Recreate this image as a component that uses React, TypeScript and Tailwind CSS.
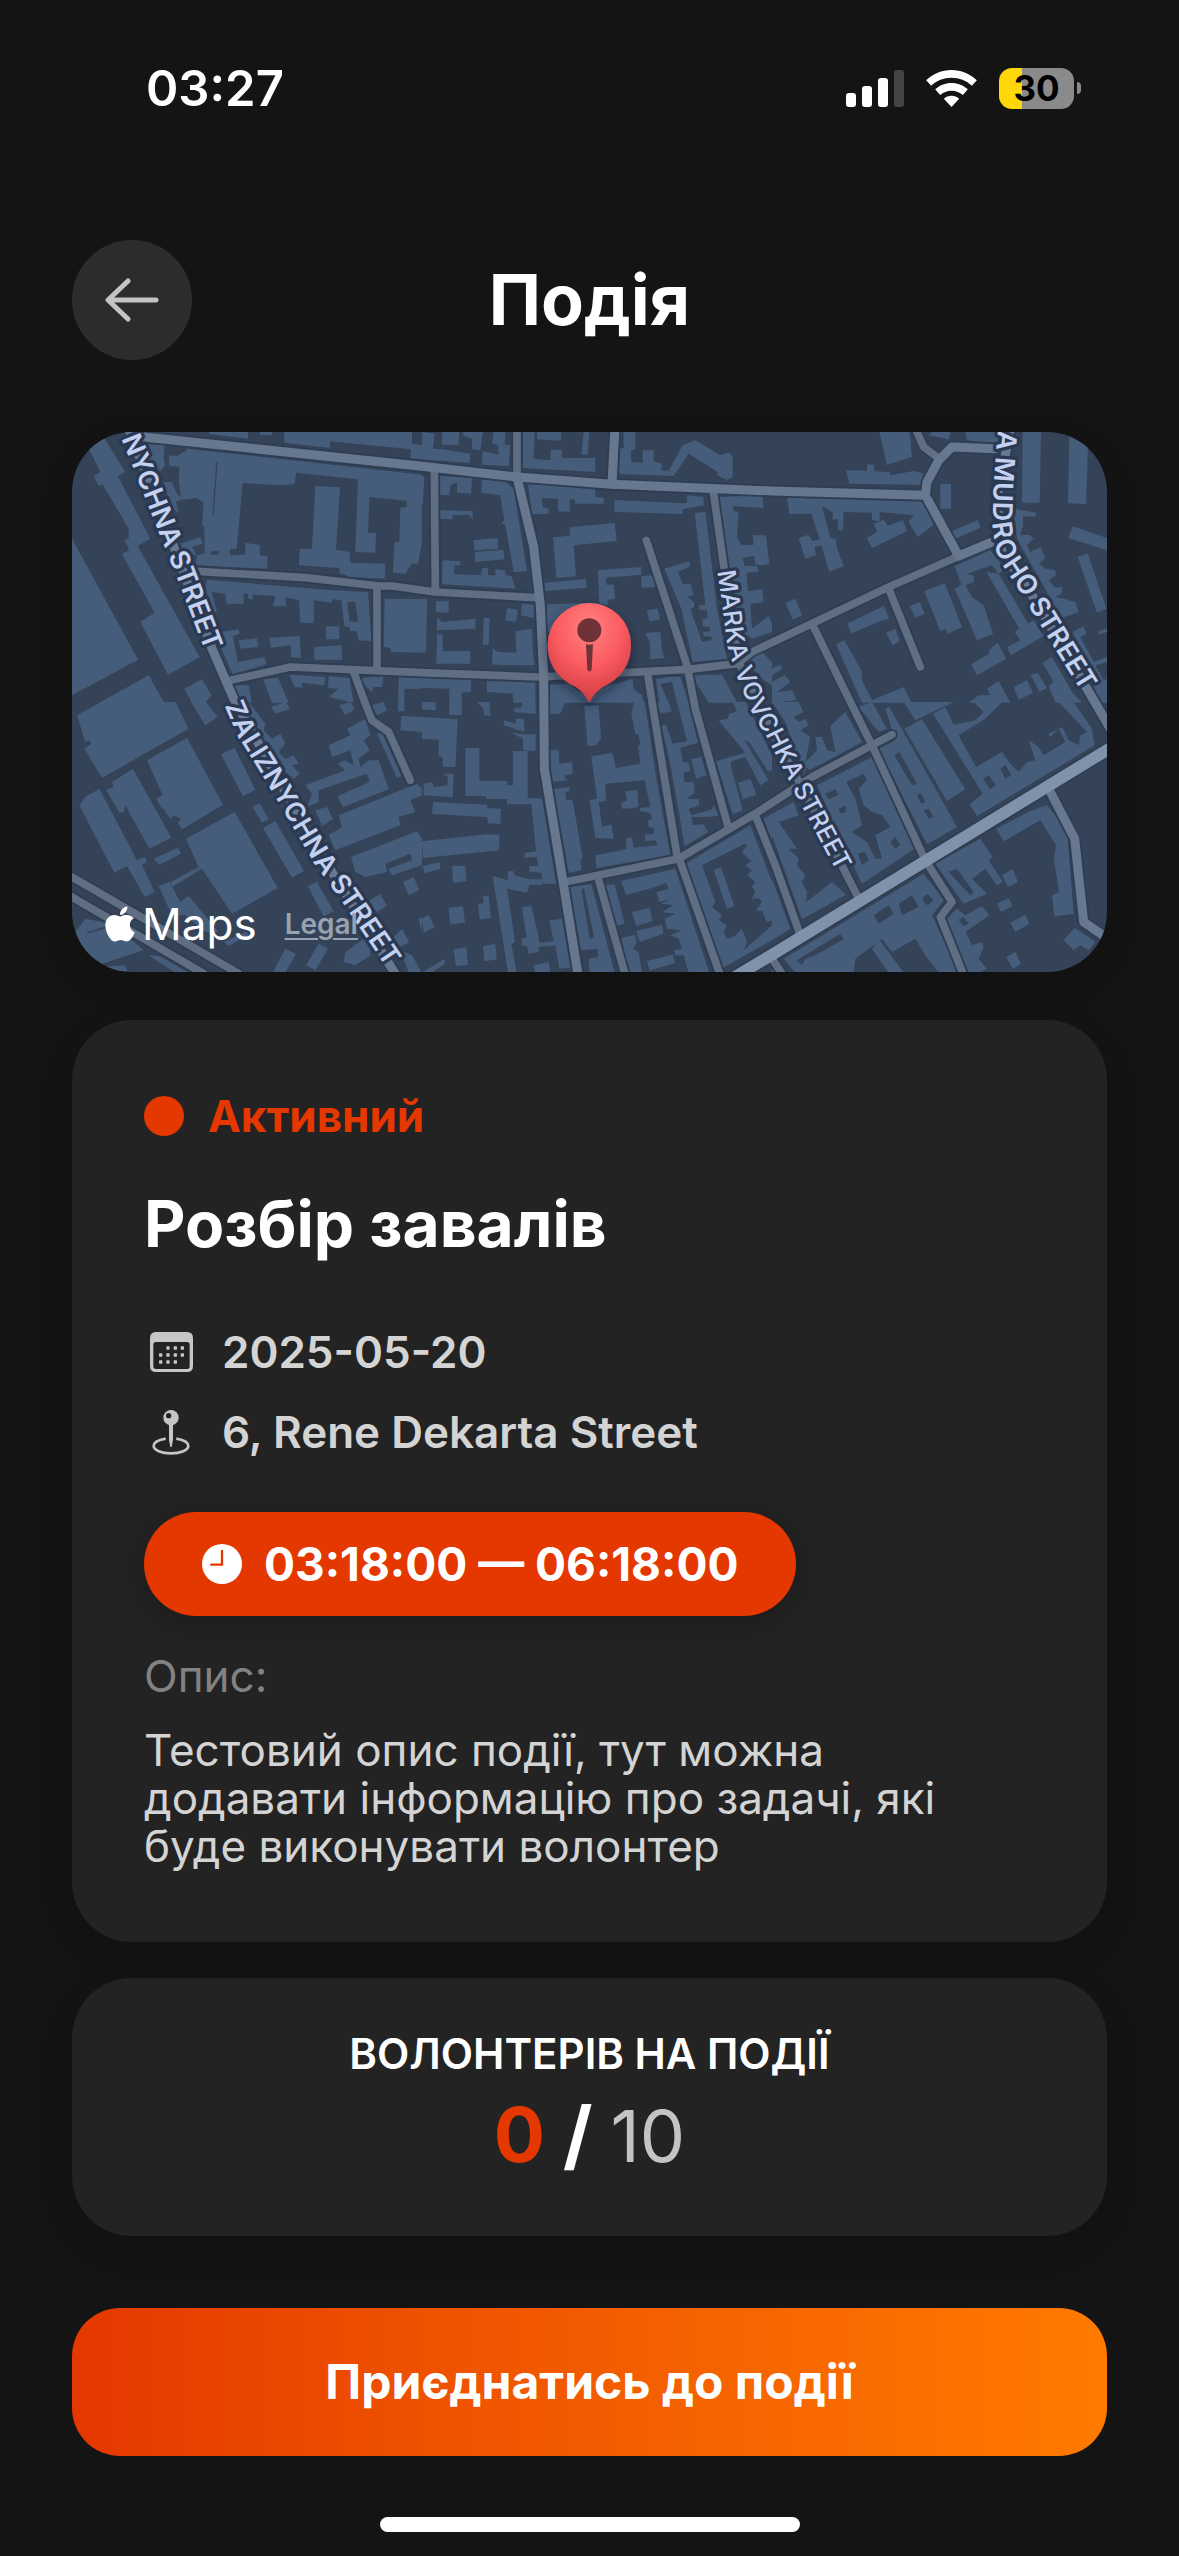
import React from "react";
import { FaApple } from "react-icons/fa";

type Tile = { x: number; y: number; shapes: string[]; yards?: string[] };

const tiles: Tile[] = [
  {
    x: 0,
    y: 0,
    shapes: [
      "50,50 95,15 160,120 137,132 235,320 197,342 383,676 288,728 205,570 248,542 150,367 172,355 158,325 170,318 170,290 92,157 80,162 65,132 85,120",
      "0,320 198,683 0,790",
      "86,810 230,730 275,810",
      "337,770 390,742 418,790 400,812 360,812",
      "412,0 528,0 528,20 412,6",
      "563,0 600,0 600,10 563,8",
      "637,0 1020,0 1020,35 1050,40 1050,82 1016,78 1016,52 775,28 773,48 637,32",
      "220,35 278,40 275,80 280,100 265,118 235,95",
      "275,150 300,150 312,180 330,200 312,210 320,240 300,235",
      "290,70 315,72 340,58 345,50 1050,128 1050,330 1038,395 1020,395 1000,425 963,422 968,330 982,330 985,228 1004,225 1004,206 892,195 888,303 912,303 910,362 850,360 858,142 672,122 668,156 625,160 512,153 494,350 474,352 474,370 520,368 520,333 563,338 563,370 587,373 585,410 468,405 370,398 375,370 398,365 397,285 390,280 395,212 375,198 328,203 320,145 322,105 292,102",
      "730,162 804,166 792,353 832,360 835,392 940,395 938,440 832,434 802,422 802,408 681,400 683,350 720,350",
      "325,335 385,315 392,335 360,345 375,370 340,365",
      "405,443 663,465 780,475 888,480 898,628 860,625 855,598 835,597 832,585 817,583 808,505 782,502 780,512 725,505 725,573 685,572 681,505 640,495 643,523 603,523 610,492 543,488 542,502 528,500 528,485 515,485 515,515 463,515 460,485 418,480 435,538 425,540 400,470",
      "445,600 500,592 503,605 483,612 497,690 578,675 583,697 482,727 440,630",
      "500,625 555,618 558,645 505,650",
      "592,617 683,612 687,678 657,675 657,640 597,647",
      "762,583 802,583 802,622 762,622",
      "727,645 810,640 810,683 727,683",
      "938,500 1050,502 1050,662 957,660 955,648 935,645",
      "573,742 618,737 650,812 600,812",
      "652,728 760,735 757,760 690,752 692,767 668,765",
      "770,732 832,738 845,812 770,795 800,770 768,768",
      "868,738 935,732 930,765 905,765 900,780 878,760",
      "980,735 1050,738 1050,770 997,770 997,838 978,838",
      "490,760 530,760 540,812 500,800",
    ],
    yards: ["826,510 850,510 858,570 832,568", "433,90 437,90 425,250 421,250", "418,357 440,357 440,368 416,368"],
  },
  {
    x: 1050,
    y: 0,
    shapes: [
      "0,0 38,5 33,50 60,52 145,65 143,93 0,82",
      "60,0 112,0 110,38 60,38",
      "122,0 183,0 175,55 150,52 150,20 125,12",
      "215,0 250,0 248,38 264,40 260,102 180,98 182,58 230,68 228,38 210,35",
      "303,0 338,0 335,80 385,85 387,53 420,53 420,78 520,78 520,120 303,108",
      "345,0 417,0 417,26 345,22",
      "485,0 502,0 497,68 478,68",
      "605,0 640,0 640,52 627,55 628,90 662,92 662,55 695,55 695,88 720,95 718,115 740,116 782,40 820,25 895,70 920,62 932,72 932,135 915,144 885,130 887,120 800,65 755,132 592,126 592,50 605,48",
      "0,132 7,135 2,215 0,215",
      "52,132 150,138 147,185 105,182 105,150 85,162 82,190 52,188",
      "180,142 250,148 275,170 315,418 275,420 250,280 238,272 247,265 235,190 178,182",
      "52,235 152,237 152,262 138,248 92,250 92,262 52,260",
      "155,325 227,318 228,350 157,355",
      "158,360 245,353 247,382 160,390",
      "62,385 115,388 115,400 97,400 97,427 177,430 180,408 198,408 198,430 220,430 220,412 250,415 250,430 268,432 281,470 60,457",
      "318,157 520,165 520,195 545,197 545,215 460,215 458,202 443,203 443,240 408,238 408,200 360,198 362,225 380,230 380,245 330,247 325,210",
      "578,204 782,214 795,212 795,190 845,195 845,220 782,232 782,246 577,240",
      "443,286 578,273 584,327 455,340 462,433 403,438 393,316 443,311",
      "368,452 492,441 494,467 370,477",
      "528,415 657,405 659,428 553,437 553,458 575,458 579,500 557,503 557,520 532,515",
      "657,432 692,430 700,465 660,468",
      "375,517 515,512 540,600 375,600",
      "675,535 707,530 714,563 682,568",
      "670,603 715,600 720,655 727,678 685,682 683,630",
      "818,243 850,240 885,530 915,680 812,690 778,530 727,410 802,388 805,403 768,420 782,457 805,455 815,490 797,493 817,512 815,527 805,530 840,630 867,625 870,615 845,612 843,600 865,598 862,585 842,583 842,560 857,558 855,535 832,535 832,520 850,518",
      "893,195 1020,190 1025,228 932,222 935,237 950,240 945,315 958,340 995,338 992,310 1032,310 1042,395 1020,400 1000,398 997,372 962,378 968,402 1005,402 1010,418 973,422 978,478 1020,472 1025,510 985,515 990,590 1040,552 1050,575 1050,600 990,620 960,600 930,480 900,290",
      "0,500 15,502 12,662 0,660",
      "42,508 80,508 80,543 42,540",
      "45,557 62,570 160,560 160,590 45,595",
      "185,558 203,558 200,638 183,638",
      "255,528 288,533 282,570 250,565",
      "300,515 335,518 335,558 297,550",
      "280,598 330,590 332,655 338,700 210,698 212,648 228,660 283,662",
      "45,607 62,607 62,657 145,657 145,695 43,695",
      "0,738 148,742 146,780 118,782 120,848 82,848 82,770 0,768",
      "195,747 340,750 340,812 275,812 272,785 195,780",
      "382,758 440,755 470,780 545,765 632,740 635,772 660,790 665,812 382,812",
      "702,742 740,735 775,735 800,812 765,812 750,750 715,755 740,812 712,812",
      "808,730 900,728 945,812 860,812",
      "950,665 1000,640 1050,690 1050,760 1020,740",
    ],
  },
  {
    x: 2100,
    y: 0,
    shapes: [
      "322,0 413,0 420,75 345,98",
      "222,115 285,116 285,97 307,98 307,118 353,120 355,130 425,117 455,125 445,158 232,155",
      "480,0 536,0 530,22 470,10",
      "580,0 680,0 680,35 585,25",
      "752,0 807,0 803,212 750,212",
      "892,12 948,40 942,216 888,214",
      "505,155 537,156 537,230 505,230",
      "45,197 450,205 485,278 437,315 410,270 425,250 323,240 323,268 300,265 300,242 215,240 213,296 198,294 198,262 182,262 182,240 150,222 175,318 192,320 195,350 215,402 172,420 148,340 128,345 132,370 100,381 80,318 110,308 120,328 143,322 118,245 52,246",
      "285,318 315,300 305,275 335,263 347,282 393,264 405,298 300,348",
      "538,298 618,264 625,288 545,322",
      "902,283 1005,318 1005,355 888,318",
      "725,230 792,242 790,255 753,252 753,280 745,310 772,308 785,320 765,340 775,360 805,345 820,378 800,395 822,410 850,415 852,430 830,445 850,468 872,465 868,485 850,495 875,500 910,510 920,540 870,558 830,490 735,320",
      "917,375 947,364 1003,530 975,542",
      "548,402 655,355 700,410 680,425 660,400 585,425 607,432 605,450 580,460 600,495 635,520 663,605 615,625 548,470 568,458",
      "643,420 680,425 768,575 785,565 815,612 717,670 705,645 745,625 728,600 742,590",
      "457,478 518,453 570,585 527,606 520,590 505,597",
      "413,523 443,510 458,545 430,558",
      "225,575 335,522 352,560 325,568 238,604",
      "342,602 370,590 383,628 362,640",
      "40,512 70,500 90,550 63,563",
      "192,637 217,625 268,715 270,745 300,805 395,765 418,812 270,812",
      "598,697 652,665 652,653 677,633 703,680 615,730",
      "0,710 25,697 30,712 0,730",
      "0,750 38,730 55,750 15,780 60,775 75,805 0,812",
      "645,770 680,748 715,812 590,812 620,790 655,790",
      "725,765 765,745 783,783 740,803",
      "776,730 797,722 825,768 803,780",
      "812,692 840,675 900,780 930,812 850,812 830,762 845,750",
      "902,600 935,583 943,605 925,615 965,690 1005,675 1005,690 970,700 995,745 1005,740 1005,812 985,812",
      "978,600 1005,588 1005,600 980,608",
    ],
  },
  {
    x: 0,
    y: 810,
    shapes: [
      "15,40 86,0 310,0 350,80 90,228 37,140 58,125 50,115 40,120",
      "357,0 402,0 437,45 400,70",
      "225,175 345,108 453,308 330,382 318,362 327,350 305,340 295,350 275,320 270,320 252,290 272,280",
      "102,265 125,255 120,240 183,200 298,407 232,440 160,310 155,330 143,332",
      "22,310 40,285 82,260 195,475 220,465 225,480 210,490 248,570 218,585 165,492 127,512",
      "342,410 488,330 617,558 480,635 390,500 300,555 295,540 380,495",
      "447,157 487,137 550,263 513,283",
      "542,315 563,303 590,352 570,362",
      "573,378 610,357 696,507 660,527",
      "245,470 318,437 327,455 262,488",
      "260,553 292,540 325,600 350,582 440,690 400,690 340,640 300,640",
      "707,552 735,540 785,628 755,643",
      "10,690 40,650 120,665 215,745 90,785 40,755",
      "85,795 160,790 165,807 130,808",
      "228,760 262,762 350,812 310,812",
      "455,720 520,690 530,700 470,732",
      "602,812 640,740 672,755 640,812",
      "702,790 740,725 768,740 730,805",
      "820,750 890,700 895,760 850,790 815,780",
      "885,600 925,575 945,612 915,630",
      "950,720 990,680 1012,720 975,740",
      "1040,650 1050,645 1050,690",
      "985,745 1020,760 1050,812 1010,812",
      "597,15 640,0 655,20 610,35",
      "505,0 530,0 580,65 575,85 600,110 625,95 640,125 620,150 640,170 665,160 680,185 660,190 683,215 665,230 640,210",
      "770,130 835,100 825,80 880,50 895,100 875,115 893,145 860,170 865,195 890,175 920,175 950,262 812,315 797,282 893,240 885,215 740,265 740,300 705,315 720,275 700,250 820,205 797,185 820,175 845,190 835,145 780,165",
      "800,340 1035,245 1050,260 1050,280 1015,295 1030,330 980,345 985,370 790,445 770,400 810,375",
      "730,325 765,315 783,350 750,372",
      "837,465 1035,388 1050,410 1050,490 960,520 950,500 1020,475 1015,455 940,485 945,510 880,525 850,510",
      "993,540 1025,525 1042,565 1010,580",
      "915,95 930,92 988,222 975,228",
      "988,42 1050,45 1050,90 985,85",
      "802,10 835,0 848,22 820,40",
      "900,10 935,0 945,25 915,40",
    ],
    yards: ["45,690 105,672 108,676 47,695"],
  },
  {
    x: 1050,
    y: 810,
    shapes: [
      "0,45 107,52 100,196 62,194 62,165 50,163 50,113 0,111",
      "5,245 30,240 35,255 75,250 78,225 62,215 95,215 92,286 5,280",
      "130,138 172,138 172,237 255,237 255,250 273,250 273,147 317,147 317,287 360,290 402,545 365,545 357,512 322,510 322,492 348,492 345,465 308,467 308,452 342,448 328,307 255,307 255,291 193,291 193,283 130,281",
      "33,300 195,308 197,318 237,320 235,366 198,364 195,345 30,336",
      "0,418 195,397 232,398 232,445 3,468",
      "2,492 52,480 56,500 8,514",
      "90,493 130,491 133,538 93,542",
      "212,522 258,535 258,508 275,507 277,520 322,532 362,532 362,548 322,548 315,572 255,560 275,690 278,722 268,725 284,812 258,812",
      "80,618 123,612 129,662 85,667",
      "168,607 185,603 183,583 200,580 207,648 173,652",
      "0,650 20,638 38,675 5,693",
      "95,742 133,736 138,788 102,792",
      "183,732 220,725 224,773 187,777",
      "0,812 68,770 68,785 30,812",
      "300,615 328,612 350,705 352,722 395,718 382,655 420,650 445,797 412,800 400,730 350,735 350,750 320,755 315,733 300,730 298,710 313,705",
      "335,790 380,780 385,812 340,812",
      "245,55 282,65 282,50 305,50 308,88 290,85 247,70",
      "267,92 305,97 341,97 341,147 303,145 303,110",
      "85,0 120,0 120,38 82,38",
      "0,0 40,0 42,25 0,22",
      "165,0 203,0 205,42 187,40 185,20",
      "275,20 300,15 300,0 341,0 341,35 278,30",
      "381,0 430,0 415,35 381,35",
      "487,12 530,10 537,108 523,130 497,132",
      "381,145 410,145 412,185 450,180 452,215 425,222 437,235 392,240",
      "392,262 442,255 443,268 430,270 432,293 452,295 482,470 475,472 478,505 440,512 428,440",
      "508,163 571,153 582,198 655,185 648,130 655,130 650,98 640,95 628,35 637,0 668,0 703,230 745,460 523,498 520,460 585,448 613,440 613,408 630,408 635,437 707,430 700,415 670,418 668,398 697,395 695,378 680,375 678,355 690,350 685,332 655,328 653,318 685,315 668,235 550,245 552,297 530,300 540,375 568,367 575,410 520,408 503,295 525,290",
      "610,268 645,264 650,312 640,318 600,320 597,302 615,295",
      "705,0 740,0 750,28 715,35",
      "718,70 732,68 752,125 795,118 765,0 800,0 828,122 775,137 782,180 800,182 805,207 785,212 787,240 815,240 818,272 795,290 830,292 832,310 800,320 808,340 870,322 875,310 890,342 845,345 808,345 812,370 845,367 858,390 788,433 745,185",
      "807,172 838,165 853,220 822,230",
      "890,55 917,50 922,35 945,28 932,0 970,0 1050,160 1050,205 1038,208 985,125 965,110 1040,235 1015,250 970,165 930,178 925,185 962,325 932,337 882,178 970,152",
      "948,242 985,230 1003,278 963,292",
      "1025,350 1050,335 1050,415",
      "790,485 985,370 1050,540 1050,655 1033,660 1022,628 1003,625 1020,598 1010,588 990,590 1000,568 990,555 1000,540 975,520 990,505 970,490 988,478 960,450 975,430 968,425 840,490 880,600 870,615 900,640 890,655 915,670 905,690 915,710 935,705 960,680 975,720 965,745 1050,670 1050,715 902,798",
      "875,503 897,495 937,612 915,622",
      "598,537 760,500 862,812 800,812 785,760 760,760 755,745 780,740 770,710 745,700 780,685 735,680 728,650 760,635 720,630 755,610 718,605 745,590 712,600 703,570 740,560 732,542 700,555 612,580",
      "630,630 683,618 692,657 642,672",
      "642,687 720,668 724,695 653,720",
      "675,778 752,757 760,782 683,806",
      "547,550 578,547 608,665 582,672",
      "598,708 638,698 645,720 632,740 650,750 660,812 620,812",
      "443,555 508,547 578,812 503,812 500,770 530,765 525,740 478,745",
    ],
    yards: ["478,560 486,560 516,705 503,710"],
  },
  {
    x: 2100,
    y: 810,
    shapes: [
      "0,0 80,0 95,30 65,45 80,60 100,50 110,70 85,85 115,105 100,180 110,190 95,215 40,60",
      "100,180 135,145 130,105 150,105 165,145 190,150 175,72 220,30 270,120 160,180 110,205",
      "260,15 300,0 345,80 320,90",
      "395,0 545,0 430,55",
      "340,20 352,15 555,375 465,427 320,140 370,115",
      "397,80 450,52 580,262 525,297",
      "483,35 520,15 545,68 610,55 635,30 605,0 690,0 640,50 560,100 612,195 690,150 715,185 740,210 765,180 790,175 770,115 800,135 815,160 880,120 860,80 835,105 830,95 870,75 890,115 920,130 925,100 945,90 860,0 905,0 960,80 967,130 615,343 593,307 632,275",
      "672,380 780,325 825,310 885,385 905,635 847,643 840,580 862,570 845,470 852,430 805,355 695,418",
      "135,250 300,165 435,435 270,545 200,400",
      "0,335 65,300 80,340 20,360 75,440 50,440 80,470 75,490 100,520 90,540 105,570 103,600 180,540 222,578 90,652 0,400",
      "490,485 625,410 662,465 650,475 693,540 675,550 640,500 600,530 645,575 575,605",
      "690,520 722,502 738,540 708,555",
      "675,605 710,588 722,612 687,630",
      "715,662 760,638 772,665 730,690",
      "875,715 908,677 970,720 950,745 925,730 905,745",
      "525,650 555,620 580,640 630,612 652,640 580,690 600,730 630,720 635,735 620,770 645,800 620,812 590,812",
      "703,765 730,750 747,785 722,800",
      "35,770 455,515 515,595 480,640 560,812 500,812 460,760 430,710 360,750 330,710 250,770 245,812 70,812",
      "320,710 395,812 350,812 300,740",
      "0,530 55,680 0,715",
      "0,780 20,812 0,812",
    ],
    yards: [
      "633,230 650,220 672,250 655,262",
      "685,200 700,190 718,220 700,230",
      "222,240 275,215 285,235 260,260 275,310 300,330 330,340 355,375 310,400 330,470 310,470 285,420 240,390 270,370 250,290",
      "160,275 190,262 200,278 170,292",
      "200,320 220,310 222,330 205,335",
      "355,420 370,405 385,430 370,440",
      "258,455 280,450 290,475 270,490",
      "305,640 350,610 365,635 320,665",
      "380,605 420,580 440,615 390,640",
      "450,590 465,575 485,595 465,610",
      "367,160 382,150 435,245 420,250",
      "435,280 445,272 460,300 448,305",
      "455,325 470,320 485,345 470,350",
      "530,510 555,500 605,570 595,580",
      "75,775 205,695 215,712 130,760 100,770 90,790",
      "560,655 575,645 590,665 575,672",
    ],
  },
];

const localRoads = [
  "375,418 700,437 920,462 960,462 1090,480 1390,497",
  "915,470 915,715",
  "1087,115 1090,480",
  "475,745 655,705 1050,722 1400,735 1850,712 1995,695 2040,660 2250,560 2450,465 2655,375",
  "845,720 880,815 900,865 950,900 1015,1045",
  "1335,0 1335,135",
  "1723,325 1845,700 1870,830 1970,1190",
  "1727,725 1740,810 1815,1270 1825,1290 1945,1630",
  "1490,1348 1820,1280 2050,1145 2220,1035 2460,908",
  "1580,1345 1660,1630",
  "2050,1150 2110,1300 2185,1510",
  "1925,185 1955,400 2000,690 2100,900 2190,1065 2355,1390",
  "2220,575 2340,820 2400,940 2560,1285 2640,1410 2605,1455 2675,1630",
  "2450,470 2545,705",
  "2100,1580 2140,1640",
  "0,1335 500,1625",
  "0,1395 395,1625",
  "2535,0 2555,45 2595,75",
];

const streets = [
  "215,15 1050,103 1335,135 1620,157 2100,177 2560,190",
  "2770,50 2640,45 2600,85 2565,150 2560,190 2660,372 2760,330",
  "170,-10 300,330 420,650 485,800 640,1080 780,1320 985,1650",
  "1628,0 1620,157",
  "1335,135 1385,345 1405,520 1415,735 1417,1010 1470,1330 1520,1640",
  "2935,1080 3008,1220 3035,1470 3115,1525",
  "2815,-10 2775,200 2790,360 2880,490 3045,770 3115,890",
];

const avenue = "1980,1640 2100,1568 3120,945";

function Roads({ lines, color, width }: { lines: string[]; color: string; width: number }) {
  return (
    <g fill="none" stroke={color} strokeWidth={width} strokeLinecap="round" strokeLinejoin="round">
      {lines.map((points) => (
        <polyline key={points} points={points} />
      ))}
    </g>
  );
}

function StreetMap() {
  return (
    <svg
      className="block h-full w-full"
      viewBox="0 0 3105 1620"
      preserveAspectRatio="xMidYMid slice"
      fontFamily="Inter, sans-serif"
      role="img"
      aria-label="Мапа"
    >
      <defs>
        <radialGradient id="pinFill" cx="0.5" cy="0.25" r="0.75">
          <stop offset="0" stopColor="#ff8284" />
          <stop offset="0.5" stopColor="#fb5d61" />
          <stop offset="1" stopColor="#cf3a40" />
        </radialGradient>
        <filter id="pinShadow" x="-40%" y="-40%" width="180%" height="180%">
          <feDropShadow dx="0" dy="14" stdDeviation="16" floodColor="#0d1522" floodOpacity="0.5" />
        </filter>
        <path id="streetA" d="M130 -120 L160 -30 L215 105 L290 295 L335 405 L428 648" />
        <path id="streetB" d="M480 798 L520 890 L600 1020 L665 1130 L760 1290 L820 1370 L975 1600" />
        <path id="streetC" d="M1960 400 L1975 500 L1993 640 L2020 725 L2062 825 L2115 915 L2195 1075 L2325 1320" />
        <path id="streetD" d="M2823 -160 L2803 50 L2795 160 L2791 280 L2800 345 L2825 395 L2865 455 L2910 530 L3055 765" />
      </defs>
      <rect width="3105" height="1620" fill="#344358" />
      {tiles.map((tile) => (
        <g key={`${tile.x}-${tile.y}`} transform={`translate(${tile.x} ${tile.y})`}>
          <g fill="#455d7b">
            {tile.shapes.map((points) => (
              <polygon key={points} points={points} />
            ))}
          </g>
          <g fill="#344358">
            {(tile.yards ?? []).map((points) => (
              <polygon key={points} points={points} />
            ))}
          </g>
        </g>
      ))}
      <Roads lines={localRoads} color="#2e3d52" width={34} />
      <Roads lines={streets} color="#2e3d52" width={38} />
      <Roads lines={[avenue]} color="#2e3d52" width={46} />
      <Roads lines={localRoads} color="#5f6e82" width={23} />
      <Roads lines={streets} color="#66778f" width={27} />
      <Roads lines={[avenue]} color="#8092ab" width={35} />
      <g
        fill="#c3d0ef"
        stroke="#2a3951"
        strokeWidth="20"
        strokeLinejoin="round"
        paintOrder="stroke"
        dominantBaseline="central"
        fontSize="81"
        fontWeight="600"
      >
        <text textAnchor="end">
          <textPath href="#streetA" startOffset="100%">NYCHNA STREET</textPath>
        </text>
        <text textAnchor="middle">
          <textPath href="#streetB" startOffset="50%">ZALIZNYCHNA STREET</textPath>
        </text>
        <text textAnchor="middle" fontSize="75" fontWeight="500">
          <textPath href="#streetC" startOffset="50%">MARKA VOVCHKA STREET</textPath>
        </text>
        <text textAnchor="end">
          <textPath href="#streetD" startOffset="100%">A MUDROHO STREET</textPath>
        </text>
      </g>
      <g filter="url(#pinShadow)">
        <path
          d="M1552 513 A125 125 0 0 1 1677 638 C1677 702 1640 742 1598 762 C1576 774 1564 790 1552 812 C1540 790 1528 774 1506 762 C1464 742 1427 702 1427 638 A125 125 0 0 1 1552 513 Z"
          fill="url(#pinFill)"
        />
      </g>
      <circle cx="1552" cy="595" r="36" fill="#6f3236" />
      <path d="M1542 636 q10 4 21 0 l-4 77 q-6 10 -13 0 z" fill="#6f3236" />
    </svg>
  );
}

function StatusBar() {
  return (
    <div className="flex h-44 items-center justify-between pr-[98px] pl-[146px]">
      <span className="text-[49px] leading-none font-semibold">03:27</span>
      <div className="flex items-center gap-[22px]">
        <svg className="h-[37px] w-[58px]" viewBox="0 0 174 111" fill="#fff" aria-hidden="true">
          <rect x="0" y="69" width="30" height="42" rx="9" />
          <rect x="48" y="48" width="30" height="63" rx="9" />
          <rect x="96" y="24" width="30" height="87" rx="9" />
          <rect x="144" y="0" width="30" height="111" rx="9" fill="#454545" />
        </svg>
        <svg className="h-[37px] w-[51px]" viewBox="0 0 152 111" fill="#fff" aria-hidden="true">
          <path d="M76 0 C105 0 132 11 152 31 L137 47 C121 31 99 23 76 23 C53 23 31 31 15 47 L0 31 C20 11 47 0 76 0 Z" />
          <path d="M76 39 C95 39 112 46 125 58 L110 75 C101 67 89 62 76 62 C63 62 51 67 42 75 L27 58 C40 46 57 39 76 39 Z" />
          <path d="M76 77 C85 77 93 80 99 86 L76 111 L53 86 C59 80 67 77 76 77 Z" />
        </svg>
        <div className="flex items-center gap-[3px]">
          <div className="flex h-[41px] w-[75px] items-center justify-center rounded-[13px] bg-[linear-gradient(90deg,#ffd60a_31%,#8a8a8a_31%)] text-[35px] leading-none font-bold text-black">
            30
          </div>
          <div className="h-3 w-1 rounded-r-full bg-[#8a8a8a]" />
        </div>
      </div>
    </div>
  );
}

function CalendarIcon() {
  return (
    <svg className="h-10 w-[43px]" viewBox="0 0 129 120" fill="#c6c6c6" aria-hidden="true">
      <path
        fillRule="evenodd"
        d="M18 0 H111 Q129 0 129 18 V102 Q129 120 111 120 H18 Q0 120 0 102 V18 Q0 0 18 0 Z M18 30 Q10 30 10 38 V103 Q10 111 18 111 H111 Q119 111 119 103 V38 Q119 30 111 30 Z"
      />
      {[
        [49, 43], [71, 43], [92, 43],
        [27, 64], [49, 64], [71, 64], [92, 64],
        [27, 85], [49, 85], [71, 85],
      ].map(([x, y]) => (
        <rect key={`${x}-${y}`} x={x} y={y} width="10" height="10" rx="2" />
      ))}
    </svg>
  );
}

function PinIcon() {
  return (
    <svg className="h-[45px] w-[38px]" viewBox="0 0 114 135" aria-hidden="true">
      <path
        d="M41 86 C18 90 5 98 5 108 C5 120 28 130 57 130 C86 130 109 120 109 108 C109 98 96 90 73 86"
        fill="none"
        stroke="#c6c6c6"
        strokeWidth="8"
      />
      <path d="M51 40 H63 V90 L59 111 H55 L51 90 Z" fill="#c6c6c6" />
      <circle cx="57" cy="23" r="23" fill="#c6c6c6" />
      <circle cx="50" cy="17" r="8" fill="#232323" />
    </svg>
  );
}

function ClockIcon() {
  return (
    <svg className="size-10" viewBox="0 0 120 120" aria-hidden="true">
      <circle cx="60" cy="60" r="60" fill="#fff" />
      <path d="M60 21 V62 H28" fill="none" stroke="#e53700" strokeWidth="7" strokeLinecap="round" strokeLinejoin="round" />
    </svg>
  );
}

export default function App() {
  return (
    <div
      lang="uk"
      className="flex min-h-screen flex-col bg-[#141414] font-['Inter','Noto_Sans',sans-serif] text-white"
    >
      <StatusBar />
      <main className="flex flex-col px-[72px] pt-16">
        <header className="grid grid-cols-[120px_1fr_120px] items-center">
          <button
            type="button"
            aria-label="Назад"
            className="flex size-[120px] items-center justify-center rounded-full bg-[#2c2c2c]"
          >
            <svg className="h-11 w-14" viewBox="0 0 56 44" fill="none" stroke="#c4c4c4" strokeWidth="5" strokeLinecap="round" strokeLinejoin="round" aria-hidden="true">
              <path d="M24 3 L4 22 L24 41 M5 22 H52" />
            </svg>
          </button>
          <h1 className="text-center text-[70px] leading-[80px] font-bold">Подія</h1>
        </header>

        <section className="relative mt-[72px] h-[540px] overflow-hidden rounded-[60px] shadow-[0_12px_36px_rgba(0,0,0,0.15)]">
          <StreetMap />
          <div className="absolute bottom-6 left-7 flex items-center gap-7">
            <div className="flex items-center gap-0.5">
              <FaApple className="size-10" aria-hidden="true" />
              <span className="text-[44px] leading-[48px]">Maps</span>
            </div>
            <a href="#legal" className="text-[28px] leading-[48px] font-semibold text-[#98a2b0] underline decoration-2 underline-offset-4">
              Legal
            </a>
          </div>
        </section>

        <section className="mt-12 rounded-[60px] bg-[#232323] p-[72px] shadow-[0_12px_36px_rgba(0,0,0,0.15)]">
          <div className="flex items-center gap-6 text-[#e53700]">
            <span className="size-10 rounded-full bg-[#e53700]" />
            <span className="text-[44px] leading-[48px] font-bold">Активний</span>
          </div>
          <h2 className="mt-12 text-[64px] leading-[72px] font-bold">Розбір завалів</h2>
          <ul className="mt-16 flex flex-col gap-6 text-[44px] leading-[56px] font-semibold text-[#d4d4d4]">
            <li className="grid grid-cols-[54px_1fr] items-center gap-6">
              <span className="flex justify-center">
                <CalendarIcon />
              </span>
              2025-05-20
            </li>
            <li className="grid grid-cols-[54px_1fr] items-center gap-6">
              <span className="flex justify-center">
                <PinIcon />
              </span>
              6, Rene Dekarta Street
            </li>
          </ul>
          <div className="mt-[52px] flex h-[104px] w-fit items-center gap-[22px] rounded-full bg-[#e53700] px-[58px] text-[46px] leading-[56px] font-bold shadow-[0_6px_36px_rgba(0,0,0,0.25)]">
            <ClockIcon />
            03:18:00 — 06:18:00
          </div>
          <h3 className="mt-9 text-[44px] leading-[48px] text-[#828282]">Опис:</h3>
          <p className="mt-[26px] max-w-[830px] text-[44px] leading-[48px] text-[#d4d4d4]">
            Тестовий опис події, тут можна додавати інформацію про задачі, які буде виконувати волонтер
          </p>
        </section>

        <section className="mt-9 rounded-[60px] bg-[#232323] pt-[52px] pb-[60px] text-center shadow-[0_12px_36px_rgba(0,0,0,0.15)]">
          <h2 className="text-[42px] leading-[48px] font-semibold uppercase">Волонтерів на події</h2>
          <p className="mt-4 text-[76px] leading-[80px] font-bold">
            <span className="text-[#e53700]">0</span> / <span className="text-[72px] font-normal text-[#c4c4c4]">10</span>
          </p>
        </section>

        <button
          type="button"
          className="mt-[72px] h-[148px] rounded-[48px] bg-linear-to-r from-[#e53700] to-[#ff7a00] text-[48px] font-bold"
        >
          Приєднатись до події
        </button>
      </main>
      <div className="mt-auto flex justify-center pt-8 pb-6">
        <div className="h-[15px] w-[420px] rounded-full bg-white" />
      </div>
    </div>
  );
}
